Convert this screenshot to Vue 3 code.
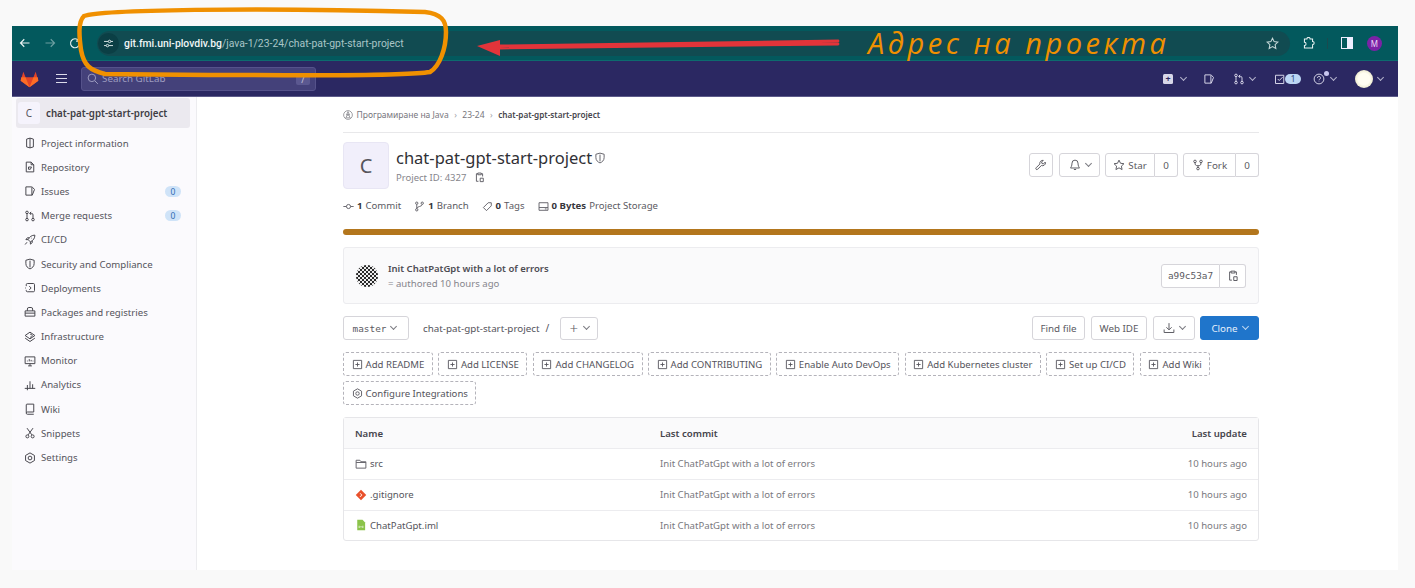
<script setup>
const ic = {
  info: 'M3.500 2.800 8 1.500l4.500 1.300v10.400L8 14.500l-4.500-1.300zM8 1.500v13',
  repo: 'M3 1.500h6.500l3.500 3.500v9.500H3zM9.500 1.500V5H13M6 8h4l-1.500 3H6z',
  issue: 'M2.500 2.500h7.500a2 2 0 0 1 1.500.7l2.500 2.800-3 7.500h-8.500zM10.500 3v10.500',
  mr: 'M4 5v6M12 11V6.500a2 2 0 0 0-2-2H8M9.500 2.500l-2 2 2 2M5.700 3.200a1.700 1.700 0 1 1-3.400 0 1.700 1.700 0 0 1 3.400 0zM5.700 12.800a1.700 1.700 0 1 1-3.400 0 1.700 1.700 0 0 1 3.400 0zM13.700 12.800a1.700 1.700 0 1 1-3.400 0 1.700 1.700 0 0 1 3.400 0z',
  rocket: 'M14.500 1.500c-4 0-7 2-9 6l3 3c4-2 6-5 6-9zM5.500 7.500H2.500l2-2.500h2.500M8.500 10.500v3l2.500-2V9M10 5.500h.7M4 11l-2.500 3',
  shield: 'M2.500 3 8 1.500 13.500 3v4.500c0 3.500-2.500 6-5.500 7-3-1-5.500-3.500-5.500-7zM8 3.500v9',
  deploy: 'M3 5.500V3.500a1.500 1.500 0 0 1 1.500-1.500h8a1.500 1.500 0 0 1 1.500 1.500v8a1.500 1.500 0 0 1-1.500 1.500H4.500A1.500 1.500 0 0 1 3 11.500V10.500M7 5.500 9.500 8 7 10.500M1.500 8h1',
  pkg: 'M1.500 6.500h13v7h-13zM4.500 6.500V4a2 2 0 0 1 2-2h3a2 2 0 0 1 2 2v2.500M1.500 9.500h13',
  infra: 'M8 1.500 14.500 6 8 10.500 1.500 6zM1.500 9.500 8 14l6.500-4.500M8 4.500a2 2 0 1 1 0 3.500',
  monitor: 'M1.500 2.500h13v9h-13zM5.500 14.500h5M8 11.500v3M4.500 8.500v-1M7 8.500v-3M9.500 8.500v-2M12 8.500v-1',
  analytics: 'M1 12.500h14M4.500 15V8M8 12.500V3M11.500 12.500V7',
  wiki: 'M3 13V2.500a1 1 0 0 1 1-1h9v10.500H4.500a1.500 1.500 0 0 0 0 3H13',
  snippet: 'M4 1.500 10.500 10.500M12 1.500 5.500 10.500M6.500 12.500a2 2 0 1 1-4 0 2 2 0 0 1 4 0zM13.500 12.500a2 2 0 1 1-4 0 2 2 0 0 1 4 0z',
  gear: 'M8 1.200 13.900 4.600v6.800L8 14.800 2.100 11.400V4.600zM10.500 8a2.500 2.500 0 1 1-5 0 2.500 2.500 0 0 1 5 0z',
  copy: 'M5.500 2.500H3.500v11h3M10.500 2.500h2v4M5.500 1.500h5v2.500h-5zM9 9h4.500v5H9z',
  commit: 'M0.500 8H5M11 8h4.500M11 8a3 3 0 1 1-6 0 3 3 0 0 1 6 0z',
  branch: 'M4 5v6M12 5c0 3.500-8 2.500-8 6M5.700 3.200a1.700 1.700 0 1 1-3.400 0 1.700 1.700 0 0 1 3.400 0zM13.700 3.200a1.700 1.700 0 1 1-3.400 0 1.700 1.700 0 0 1 3.400 0zM5.700 12.800a1.700 1.700 0 1 1-3.400 0 1.700 1.700 0 0 1 3.400 0z',
  tag: 'M9 2.500h4.500V7l-7 7L2 9.500zM11 5h.01',
  disk: 'M1.500 2.500h13v11h-13zM1.500 9.500h13M10 11.500h2.500',
  wrench: 'M14 5a4 4 0 0 1-5.500 3.700L3.500 13.700a1.400 1.400 0 0 1-2-2l5-5A4 4 0 0 1 11 1.800L8.800 4l.5 2 2 .5L13.700 4A4 4 0 0 1 14 5z',
  bell: 'M8 1.500a4 4 0 0 0-4 4c0 4-1.500 5.500-2 6.500h12c-.5-1-2-2.500-2-6.500a4 4 0 0 0-4-4zM6.500 14h3',
  star: 'M8 1.500l2 4.200 4.600.6-3.400 3.200.9 4.600L8 11.800l-4.100 2.300.9-4.600L1.400 6.300 6 5.700z',
  fork: 'M8 9v3M4 5c0 3 1 4 4 4s4-1 4-4M5.700 3.200a1.700 1.700 0 1 1-3.400 0 1.700 1.700 0 0 1 3.400 0zM13.700 3.200a1.700 1.700 0 1 1-3.400 0 1.700 1.700 0 0 1 3.400 0zM9.700 12.800a1.700 1.700 0 1 1-3.400 0 1.700 1.700 0 0 1 3.400 0z',
  download: 'M8 1.500v8.500M4.500 7 8 10.500 11.500 7M1.500 10v4h13v-4',
  plusbox: 'M2 2h12v12H2zM8 5v6M5 8h6',
  folder: 'M1.500 3h5l1.500 2h6.500v8.500h-13zM1.500 6h13'
};
const nav = [
  ['Project information', 'info'], ['Repository', 'repo'], ['Issues', 'issue', '0'], ['Merge requests', 'mr', '0'],
  ['CI/CD', 'rocket'], ['Security and Compliance', 'shield'], ['Deployments', 'deploy'], ['Packages and registries', 'pkg'],
  ['Infrastructure', 'infra'], ['Monitor', 'monitor'], ['Analytics', 'analytics'], ['Wiki', 'wiki'], ['Snippets', 'snippet'], ['Settings', 'gear']
];
const stats = [['commit', '1', 'Commit'], ['branch', '1', 'Branch'], ['tag', '0', 'Tags'], ['disk', '0 Bytes', 'Project Storage']];
const adds = ['Add README', 'Add LICENSE', 'Add CHANGELOG', 'Add CONTRIBUTING', 'Enable Auto DevOps', 'Add Kubernetes cluster', 'Set up CI/CD', 'Add Wiki'];
const files = [['src', 'folder'], ['.gitignore', 'git'], ['ChatPatGpt.iml', 'xml']];
</script>

<template>
  <div class="page">
    <div class="window">
      <header class="chrome">
        <svg class="ci" viewBox="0 0 16 16"><path d="M14 8H2.500M7 3 2 8l5 5" /></svg>
        <svg class="ci dim" viewBox="0 0 16 16"><path d="M2 8h11.500M9 3l5 5-5 5" /></svg>
        <svg class="ci" viewBox="0 0 16 16"><path d="M13 5a6 6 0 1 0 1 3M13.500 1.500V5.500H9.500" /></svg>
        <div class="omni">
          <span class="site"><svg viewBox="0 0 16 16"><path d="M1.500 5h6M11.500 5h3M1.500 11h3M8.500 11h6M9.500 3.200a1.800 1.800 0 1 1 0 3.600 1.800 1.800 0 0 1 0-3.600zM6.500 9.200a1.800 1.800 0 1 1 0 3.600 1.800 1.800 0 0 1 0-3.600z" /></svg></span>
          <span class="url"><b>git.fmi.uni-plovdiv.bg</b>/java-1/23-24/chat-pat-gpt-start-project</span>
          <svg class="omni-star" viewBox="0 0 16 16"><path :d="ic.star" /></svg>
        </div>
        <svg class="ext" viewBox="0 0 16 16"><path d="M3 2.500h3a2 2 0 0 1 4 0h3v3a2 2 0 0 1 0 4v4H3v-3a2 2 0 0 0 0-4z" /></svg>
        <i class="sep"></i>
        <span class="panel"><i></i></span>
        <span class="profile">M</span>
      </header>

      <nav class="gl">
        <svg class="fox" viewBox="0 0 25 24"><path fill="#e24329" d="M12.500 23 .7 14.200 4.300 2.200l2.900 7.500h10.600l2.900-7.500 3.600 12z" /><path fill="#fc6d26" d="M12.500 23 7.200 9.700H1.500L.7 14.200zM12.500 23l5.300-13.300h5.700l.8 4.500z" /><path fill="#fca326" d="M12.500 23 7.200 18.500 4 16l8.500 7 8.500-7-3.200 2.500z" /></svg>
        <span class="burger"><i></i><i></i><i></i></span>
        <div class="search">
          <svg viewBox="0 0 16 16"><path d="M10.500 10.500 14.500 14.500M11.500 6.500a5 5 0 1 1-10 0 5 5 0 0 1 10 0z" /></svg>
          <span>Search GitLab</span>
          <kbd>/</kbd>
        </div>
        <div class="gl-right">
          <span class="g g1"><span class="plus-sq">+</span><i class="chev"></i></span>
          <span class="g g2"><svg viewBox="0 0 16 16"><path :d="ic.issue" /></svg></span>
          <span class="g g3"><svg viewBox="0 0 16 16"><path :d="ic.mr" /></svg><i class="chev"></i></span>
          <span class="g g4"><svg viewBox="0 0 16 16"><path d="M2 3h11v11H2zM5 8l2 2 4.500-4.500" /></svg><em>1</em></span>
          <span class="g g5"><svg viewBox="0 0 16 16"><circle cx="8" cy="8" r="6.500" /><path d="M6 6.500a2 2 0 1 1 3 1.700c-.7.400-1 .8-1 1.500M8 11.500v.5" /></svg><u></u><i class="chev"></i></span>
          <span class="g g6"><span class="me"></span><i class="chev"></i></span>
        </div>
      </nav>

      <div class="body">
        <aside class="side">
          <div class="proj"><span class="proj-av">C</span><strong>chat-pat-gpt-start-project</strong></div>
          <ul>
            <li v-for="n in nav" :key="n[0]">
              <svg viewBox="0 0 16 16"><path :d="ic[n[1]]" /></svg>
              <span class="lbl">{{ n[0] }}</span>
              <span v-if="n[2]" class="cnt">{{ n[2] }}</span>
            </li>
          </ul>
        </aside>

        <main class="main">
          <div class="crumbs">
            <svg class="crumb-ic" viewBox="0 0 16 16"><circle cx="8" cy="8" r="7" /><path d="M8 2.500 5.500 8h5zM8 6l-3.500 6.500h7z" /></svg><span>Програмиране на Java</span><span class="gt">›</span><span>23-24</span><span class="gt">›</span><b>chat-pat-gpt-start-project</b>
          </div>

          <section class="head">
            <div class="big-av">C</div>
            <div class="ttl">
              <h1>chat-pat-gpt-start-project <svg viewBox="0 0 16 16"><path :d="ic.shield" /></svg></h1>
              <p>Project ID: 4327 <svg viewBox="0 0 16 16"><path :d="ic.copy" /></svg></p>
            </div>
            <div class="acts">
              <span class="btn sq"><svg viewBox="0 0 16 16"><path :d="ic.wrench" /></svg></span>
              <span class="btn bell"><svg viewBox="0 0 16 16"><path :d="ic.bell" /></svg><i class="chev d"></i></span>
              <span class="pair star"><span class="btn"><svg viewBox="0 0 16 16"><path :d="ic.star" /></svg>Star</span><span class="btn n">0</span></span>
              <span class="pair fork"><span class="btn"><svg viewBox="0 0 16 16"><path :d="ic.fork" /></svg>Fork</span><span class="btn n">0</span></span>
            </div>
          </section>

          <div class="stats">
            <span v-for="s in stats" :key="s[0]"><svg viewBox="0 0 16 16"><path :d="ic[s[0]]" /></svg><b>{{ s[1] }}</b> {{ s[2] }}</span>
          </div>

          <div class="bar"></div>

          <section class="commit">
            <span class="qr"></span>
            <div class="msg"><b>Init ChatPatGpt with a lot of errors</b><span>= authored 10 hours ago</span></div>
            <span class="pair hash"><span class="btn mono">a99c53a7</span><span class="btn cp"><svg viewBox="0 0 16 16"><path :d="ic.copy" /></svg></span></span>
          </section>

          <section class="tools">
            <span class="btn mono master">master <i class="chev d"></i></span>
            <span class="path">chat-pat-gpt-start-project</span><span class="slash">/</span>
            <span class="btn addb"><span class="pl">+</span><i class="chev d"></i></span>
            <span class="fill"></span>
            <span class="btn w1">Find file</span>
            <span class="btn w2">Web IDE</span>
            <span class="btn w3"><svg viewBox="0 0 16 16"><path :d="ic.download" /></svg><i class="chev d"></i></span>
            <span class="btn clone">Clone <i class="chev"></i></span>
          </section>

          <section class="dashes">
            <span v-for="a in adds" :key="a" class="dash"><svg viewBox="0 0 16 16"><path :d="ic.plusbox" /></svg>{{ a }}</span>
            <span class="dash"><svg viewBox="0 0 16 16"><path :d="ic.gear" /></svg>Configure Integrations</span>
          </section>

          <section class="tbl">
            <div class="tr th"><b>Name</b><b>Last commit</b><b>Last update</b></div>
            <div v-for="f in files" :key="f[0]" class="tr">
              <span class="fname">
                <svg v-if="f[1] === 'folder'" viewBox="0 0 16 16"><path :d="ic.folder" /></svg>
                <svg v-else-if="f[1] === 'git'" viewBox="0 0 16 16" class="solid"><path fill="#e9502b" d="M8 1l7 7-7 7-7-7z" /><path fill="#fff" d="M6 5.500h1.300l2.500 2.500-2.500 2.500H6L8.500 8z" /></svg>
                <svg v-else viewBox="0 0 16 16" class="solid"><path fill="#8bc34a" d="M3 1h7l3.500 3.500V15H3z" /><path fill="#fff" d="M5 9h1v3H5zM10 9h1v3h-1zM7 10h2v1H7z" /></svg>
                {{ f[0] }}
              </span>
              <span>Init ChatPatGpt with a lot of errors</span>
              <span>10 hours ago</span>
            </div>
          </section>
        </main>
      </div>
    </div>

    <svg class="marks" viewBox="0 0 1415 588">
      <path class="ring" d="M84 16C100 10 250 7 425 12C441 14 446 20 446 32C446 48 440 66 430 72C400 77 240 75 105 74C90 70 84 66 81 50C79 35 78 22 84 16Z" />
      <path class="arrow" d="M838 41 500 46M838 44 500 48" />
      <path class="head-r" d="M477 46 500 40 500 56Z" />
    </svg>
    <span class="note">Адрес на проекта</span>
  </div>
</template>

<style scoped>
.page { position: relative; width: 1415px; height: 588px; padding: 26px 17px 18px 12px; box-sizing: border-box; overflow: hidden; font-family: "Noto Sans", "Open Sans", sans-serif; color: #4a4950; }
.window { height: 544px; display: flex; flex-direction: column; background: #fff; }
svg { fill: none; stroke: currentColor; stroke-width: 1.300; flex: none; }
i, em, u { font-style: normal; text-decoration: none; }
.chev { display: inline-block; width: 4px; height: 4px; border-right: 1.300px solid currentColor; border-bottom: 1.300px solid currentColor; transform: rotate(45deg); margin: -3px 0 0 5px; vertical-align: middle; opacity: .8; }

.chrome { height: 35px; flex: none; background: #03595d; display: flex; align-items: center; color: #e9f2f2; padding-left: 7px; border-bottom: 1px solid #0d6b6e; box-sizing: border-box; }
.ci { width: 12px; height: 12px; margin-right: 13px; stroke-width: 1.600; }
.ci.dim { opacity: .45; }
.omni { width: 1193px; height: 25px; border-radius: 13px; background: #114b51; display: flex; align-items: center; margin-top: 1px; margin-left: 3px; }
.site { width: 21px; height: 21px; margin-left: 1px; border-radius: 50%; background: #0b3f45; display: flex; align-items: center; justify-content: center; }
.site svg { width: 11px; height: 11px; }
.url { margin-left: 5px; font-family: Roboto, "Noto Sans", sans-serif; font-size: 10.400px; color: #a9c5c6; flex: 1; white-space: nowrap; }
.url b { font-weight: 500; color: #f0f6f6; }
.omni-star { width: 13px; height: 13px; margin-right: 11px; color: #c6d8d8; }
.ext { width: 13px; height: 13px; margin-left: 12px; }
.sep { width: 1px; height: 11px; background: #1a4a4f; margin-left: 12px; }
.panel { width: 10px; height: 10px; margin-left: 13px; border: 1px solid #eef; background: #03595d; display: flex; justify-content: flex-end; }
.panel i { width: 5px; background: #eef; }
.profile { width: 15px; height: 15px; border-radius: 50%; background: #7b22a6; color: #e9d9f5; font-size: 8px; display: flex; align-items: center; justify-content: center; margin-left: 14px; }

.gl { height: 36px; flex: none; background: #2b2862; color: #d7d6e8; display: flex; align-items: center; border-bottom: 1px solid #5d5b8a; box-sizing: border-box; }
.fox { width: 19px; height: 18px; margin-left: 8px; stroke: none; }
.burger { display: flex; flex-direction: column; gap: 2.500px; margin-left: 17px; width: 11px; }
.burger i { height: 1.300px; background: #dcdbea; }
.search { margin-left: 14px; width: 235px; height: 24px; box-sizing: border-box; background: #44417a; border: 1px solid #55528a; border-radius: 3px; display: flex; align-items: center; padding: 0 5px; color: #9e9dc0; font-size: 9.800px; }
.search svg { width: 12px; height: 12px; margin-right: 3px; }
.search span { flex: 1; }
.search kbd { width: 14px; height: 12px; line-height: 12px; background: #5b5890; border-radius: 2px; text-align: center; font: 9px "Noto Sans", sans-serif; color: #c6c5dc; }
.gl-right { margin-left: auto; display: flex; align-items: center; padding-right: 15px; }
.g { display: flex; align-items: center; position: relative; }
.g svg { width: 12px; height: 12px; }
.plus-sq { width: 10px; height: 10px; background: #d7d6e8; color: #2b2862; border-radius: 1.500px; font: bold 9px/10px "Noto Sans", sans-serif; text-align: center; }
.g1 .chev { margin-left: 8px; }
.g2 { margin-left: 17px; }
.g3 { margin-left: 18px; }
.g4 { margin-left: 19px; }
.g5 { margin-left: 12px; }
.g6 { margin-left: 19px; }
.g4 em { width: 16px; height: 10px; margin-left: -1px; border-radius: 6px; background: #bcd6f5; color: #34508a; font-size: 9px; line-height: 10px; text-align: center; }
.g5 u { position: absolute; width: 5px; height: 5px; border-radius: 50%; background: #c9c7ef; left: 11px; top: -2px; }
.g5 .chev { margin-left: 6px; }
.me { width: 18px; height: 18px; border-radius: 50%; background: radial-gradient(circle, #fffef2 45%, #d8d4a8 100%); }

.body { flex: 1; display: flex; min-height: 0; }
.side { width: 185px; flex: none; box-sizing: border-box; background: #fbfafd; border-right: 1px solid #ececef; padding: 1px 6px 0 4px; }
.proj { height: 30px; background: #ebe9ef; border-radius: 3px; display: flex; align-items: center; padding-left: 2px; }
.proj-av { width: 22px; height: 22px; background: #f5f3fc; border-radius: 3px; display: flex; align-items: center; justify-content: center; font-size: 10px; color: #55535c; }
.proj strong { margin-left: 6px; font-size: 9.750px; font-weight: 600; color: #3e3d44; white-space: nowrap; }
.side ul { list-style: none; margin: 3px 0 0; padding: 0; }
.side li { height: 24.200px; display: flex; align-items: center; padding-left: 8px; color: #55545c; font-size: 9.650px; }
.side li svg { width: 12px; height: 12px; margin-right: 5px; color: #45444b; }
.lbl { flex: 1; white-space: nowrap; }
.cnt { width: 16px; height: 11px; border-radius: 6px; background: #cfe3f8; color: #2f6cb3; font-size: 8.500px; line-height: 11px; text-align: center; margin-right: 9px; }

.main { width: 916px; margin-left: 146px; display: flex; flex-direction: column; font-size: 9.800px; }
.crumbs { height: 35px; flex: none; border-bottom: 1px solid #e8e8ea; display: flex; align-items: center; gap: 5.500px; font-size: 8.500px; color: #77767d; }
.crumbs b { color: #47464d; font-weight: 600; font-size: 8.200px; }
.crumb-ic { width: 10px; height: 10px; color: #8a8a90; margin-right: -2px; }
.gt { color: #a0a0a5; }
.head { display: flex; height: 47px; margin-top: 9px; flex: none; }
.big-av { width: 46px; height: 47px; background: #f1effb; border: 1px solid #e8e6f4; border-radius: 4px; box-sizing: border-box; display: flex; align-items: center; justify-content: center; font-size: 20px; color: #56555c; }
.ttl { margin-left: 7px; }
.ttl h1 { margin: 5px 0 0; font-size: 16.500px; line-height: 22px; font-weight: 400; color: #303035; white-space: nowrap; display: flex; align-items: center; gap: 0; }
.ttl h1 svg { width: 12px; height: 12px; margin-left: 2px; color: #66656c; }
.ttl p { margin: 2px 0 0; font-size: 9.500px; line-height: 13px; color: #86858c; display: flex; align-items: center; }
.ttl p svg { width: 11px; height: 11px; margin-left: 8px; color: #55545c; }
.acts { margin-left: auto; display: flex; gap: 5px; margin-top: 11px; height: 24px; }
.btn { box-sizing: border-box; height: 24px; border: 1px solid #d6d5da; border-radius: 3px; background: #fff; display: inline-flex; align-items: center; justify-content: center; font-size: 9.800px; color: #5b5a62; white-space: nowrap; }
.btn svg { width: 12px; height: 12px; }
.sq { width: 24px; }
.bell { width: 41px; margin-left: 1px; }
.pair { display: flex; }
.pair .btn:first-child { border-radius: 3px 0 0 3px; gap: 3px; }
.pair .btn:last-child { border-radius: 0 3px 3px 0; border-left: 0; }
.star .btn:first-child { width: 50px; }
.star .btn:last-child { width: 23px; }
.fork .btn:first-child { width: 53px; }
.fork .btn:last-child { width: 23px; }
.stats { height: 14px; margin-top: 10px; flex: none; display: flex; gap: 13px; font-size: 9.600px; line-height: 14px; color: #5b5a62; white-space: nowrap; }
.stats span { display: inline-flex; align-items: center; gap: 3px; }
.stats svg { width: 11px; height: 11px; }
.stats b { font-weight: 700; color: #37363c; }
.bar { height: 6px; margin-top: 16px; flex: none; border-radius: 3px; background: #b3761d; }
.commit { height: 57px; flex: none; margin-top: 12px; box-sizing: border-box; border: 1px solid #ececef; border-radius: 3px; background: #fafafb; display: flex; align-items: center; padding: 0 12px; }
.qr { width: 22px; height: 22px; border-radius: 50%; background-color: #2a2a2a; background-image: linear-gradient(45deg, #eee 25%, transparent 25%, transparent 75%, #eee 75%), linear-gradient(45deg, #eee 25%, transparent 25%, transparent 75%, #eee 75%); background-size: 4px 4px; background-position: 0 0, 2px 2px; }
.msg { margin-left: 10px; flex: 1; display: flex; flex-direction: column; gap: 2px; font-size: 9.600px; line-height: 13px; color: #86858c; }
.msg b { font-weight: 600; color: #4d4c53; font-size: 9.500px; }
.mono { font-family: "DejaVu Sans Mono", "Liberation Mono", monospace; font-size: 9.400px; }
.hash .btn { height: 24px; }
.hash .btn:first-child { width: 59px; }
.hash .btn:last-child { width: 26px; }
.tools { height: 24px; margin-top: 12px; flex: none; display: flex; align-items: center; }
.master { width: 66px; padding-right: 3px; }
.path { margin-left: 14px; font-size: 9.800px; color: #55545c; }
.slash { margin-left: 6px; font-size: 10px; color: #55545c; }
.addb { width: 38px; margin-left: 11px; height: 23px; }
.pl { font-size: 15px; line-height: 14px; font-weight: 300; margin-right: 1px; }
.fill { flex: 1; }
.w1 { width: 53px; }
.w2 { width: 56px; margin-left: 6px; }
.w3 { width: 42px; margin-left: 6px; }
.clone { width: 59px; margin-left: 5px; background: #1f75cb; border-color: #1f75cb; color: #e6f0fb; }
.dashes { display: flex; flex-wrap: wrap; gap: 5px 5.500px; margin-top: 12px; flex: none; }
.dash { height: 24px; box-sizing: border-box; padding: 0 7.500px; border: 1px dashed #b4b3ba; border-radius: 3px; display: inline-flex; align-items: center; gap: 3px; font-size: 9.600px; color: #55545c; white-space: nowrap; }
.dash svg { width: 11px; height: 11px; }
.tbl { margin-top: 12px; border: 1px solid #e6e6e9; border-radius: 3px; flex: none; }
.tr { display: grid; grid-template-columns: 305px 1fr auto; align-items: center; height: 30.800px; box-sizing: border-box; padding: 0 11px; border-top: 1px solid #ececef; font-size: 9.600px; color: #7a7980; }
.th { height: 30px; border-top: 0; background: #fafafb; color: #45444b; }
.th b { font-weight: 600; }
.fname { display: flex; align-items: center; gap: 3px; color: #55545c; }
.fname svg { width: 12px; height: 12px; color: #66656c; }
.solid { stroke: none; }
.marks { position: absolute; inset: 0; width: 1415px; height: 588px; pointer-events: none; }
.ring { stroke: #f09000; stroke-width: 4.500; }
.arrow { stroke: #e2343a; stroke-width: 2.800; stroke-linecap: round; }
.head-r { fill: #e2343a; stroke: none; }
.note { position: absolute; left: 868px; top: 24px; font-family: "Open Sans", sans-serif; font-style: italic; font-size: 29px; line-height: 38px; letter-spacing: 3.500px; color: #f09000; white-space: nowrap; }
</style>

<style>
html, body { background: #f9f9f9; margin: 0; }
</style>
